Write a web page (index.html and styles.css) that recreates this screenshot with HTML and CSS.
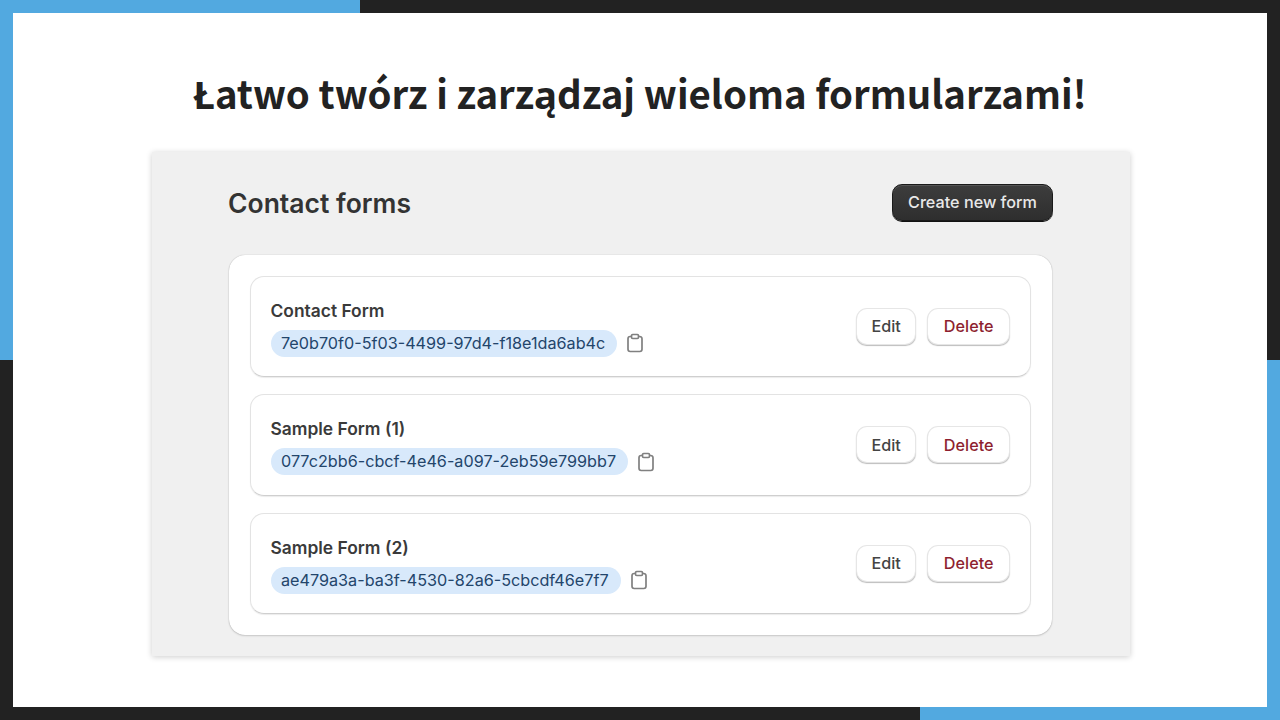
FILE: index.html
```html
<!DOCTYPE html>
<html lang="pl">
<head>
    <meta charset="UTF-8">
    <meta name="viewport" content="width=device-width, initial-scale=1.0">
    <title>Contact forms</title>
    <link rel="stylesheet" href="styles.css">
</head>
<body>
    <main class="slide">
        <h1 class="headline">Łatwo twórz i zarządzaj wieloma formularzami!</h1>
        <section class="panel">
            <div class="panel-header">
                <h2 class="panel-title">Contact forms</h2>
                <button class="button button-primary">Create new form</button>
            </div>
            <div class="card">
                <div class="form-row">
                    <div class="form-info">
                        <div class="form-name">Contact Form</div>
                        <div class="form-id-line">
                            <span class="form-id">7e0b70f0-5f03-4499-97d4-f18e1da6ab4c</span>
                            <svg class="copy-icon" viewBox="0 0 18 20"><path d="M5.5 3.5H4.2C3 3.5 2 4.5 2 5.7v10.6C2 17.500 3 18.500 4.200 18.500h9.600c1.200 0 2.200-1 2.200-2.200V5.700c0-1.200-1-2.200-2.200-2.200h-1.300"/><rect x="5.500" y="1.500" width="7" height="4" rx="1.200"/></svg>
                        </div>
                    </div>
                    <div class="form-actions">
                        <button class="button">Edit</button>
                        <button class="button button-danger">Delete</button>
                    </div>
                </div>
                <div class="form-row">
                    <div class="form-info">
                        <div class="form-name">Sample Form (1)</div>
                        <div class="form-id-line">
                            <span class="form-id">077c2bb6-cbcf-4e46-a097-2eb59e799bb7</span>
                            <svg class="copy-icon" viewBox="0 0 18 20"><path d="M5.5 3.5H4.2C3 3.5 2 4.5 2 5.7v10.6C2 17.500 3 18.500 4.200 18.500h9.600c1.200 0 2.200-1 2.200-2.200V5.700c0-1.200-1-2.200-2.200-2.200h-1.300"/><rect x="5.500" y="1.500" width="7" height="4" rx="1.200"/></svg>
                        </div>
                    </div>
                    <div class="form-actions">
                        <button class="button">Edit</button>
                        <button class="button button-danger">Delete</button>
                    </div>
                </div>
                <div class="form-row">
                    <div class="form-info">
                        <div class="form-name">Sample Form (2)</div>
                        <div class="form-id-line">
                            <span class="form-id">ae479a3a-ba3f-4530-82a6-5cbcdf46e7f7</span>
                            <svg class="copy-icon" viewBox="0 0 18 20"><path d="M5.5 3.5H4.2C3 3.5 2 4.5 2 5.7v10.6C2 17.500 3 18.500 4.200 18.500h9.600c1.200 0 2.200-1 2.200-2.200V5.700c0-1.200-1-2.200-2.200-2.200h-1.300"/><rect x="5.500" y="1.500" width="7" height="4" rx="1.200"/></svg>
                        </div>
                    </div>
                    <div class="form-actions">
                        <button class="button">Edit</button>
                        <button class="button button-danger">Delete</button>
                    </div>
                </div>
            </div>
        </section>
    </main>
</body>
</html>
```

FILE: styles.css
```css
html, body {
    height: 100%;
}
body {
    box-sizing: border-box;
    margin: 0;
    padding: 13px;
    overflow: hidden;
    font-family: Inter, "Liberation Sans", sans-serif;
    background-color: #222222;
    background-image: linear-gradient(#52a9e0, #52a9e0), linear-gradient(#52a9e0, #52a9e0);
    background-size: 360px 360px;
    background-position: left top, right bottom;
    background-repeat: no-repeat;
}
.slide {
    height: 100%;
    background-color: #ffffff;
    display: flex;
    flex-direction: column;
    align-items: center;
}
.headline {
    margin: 50px 0 0;
    height: 89px;
    font-family: "Noto Sans CJK SC", "Noto Sans", sans-serif;
    font-size: 38.370px;
    line-height: 58px;
    font-weight: 700;
    color: #222222;
}
.panel {
    box-sizing: border-box;
    width: 978px;
    height: 504px;
    margin-left: 2px;
    padding: 31px 78px 21px 77px;
    background-color: #f0f0f0;
    box-shadow: 0 1px 6px rgba(0, 0, 0, 0.2);
}
.panel-header {
    display: flex;
    justify-content: space-between;
    align-items: center;
    height: 38px;
    margin-right: -1px;
    margin-bottom: 33.600px;
}
.panel-title {
    margin: 1px 0 0 -1px;
    font-size: 26.500px;
    font-weight: 600;
    color: #333333;
}
.card {
    display: flex;
    flex-direction: column;
    gap: 17px;
    padding: 21px;
    background-color: #ffffff;
    border-radius: 16px;
    box-shadow: 0 0 1px rgba(0, 0, 0, 0.3), 0 1px 2px rgba(0, 0, 0, 0.15);
}
.form-row {
    box-sizing: border-box;
    height: 101.500px;
    display: flex;
    justify-content: space-between;
    align-items: center;
    padding: 0 21px 0 20px;
    border: 1px solid #e3e3e3;
    border-bottom-color: #cfcfcf;
    border-radius: 14px;
    box-shadow: 0 1px 1px rgba(0, 0, 0, 0.08);
}
.form-info {
    padding-top: 4px;
}
.form-name {
    margin-left: -0.500px;
    font-size: 17.400px;
    font-weight: 600;
    line-height: 22px;
    color: #3a3a3a;
    margin-bottom: 8px;
}
.form-id-line {
    display: flex;
    align-items: center;
    gap: 9px;
}
.form-id {
    padding: 3px 12px 3px 10px;
    font-size: 16.200px;
    line-height: 21px;
    color: #23456b;
    background-color: #d8e9fb;
    border-radius: 14px;
}
.copy-icon {
    width: 18px;
    height: 20px;
    fill: none;
    stroke: #808080;
    stroke-width: 1.700;
}
.form-actions {
    display: flex;
    gap: 13px;
    margin-bottom: 0;
}
.button {
    padding: 0 14.500px;
    height: 35px;
    font-family: inherit;
    font-size: 16.200px;
    font-weight: 500;
    color: #444444;
    background-color: #ffffff;
    border: none;
    border-radius: 10px;
    box-shadow: 0 0 0 1px #e6e6e6, 0 1.500px 1px 0.500px #bdbdbd;
}
.button-danger {
    padding: 0 15.500px;
    color: #8e1f2f;
}
.button-primary {
    width: 161px;
    height: 37px;
    padding: 0;
    color: #e8e8e8;
    background: linear-gradient(#3d3d3d, #2e2e2e);
    border: 1px solid #1a1a1a;
    box-shadow: inset 0 1px 0 #555555, 0 1px 0 #111111;
}
```
